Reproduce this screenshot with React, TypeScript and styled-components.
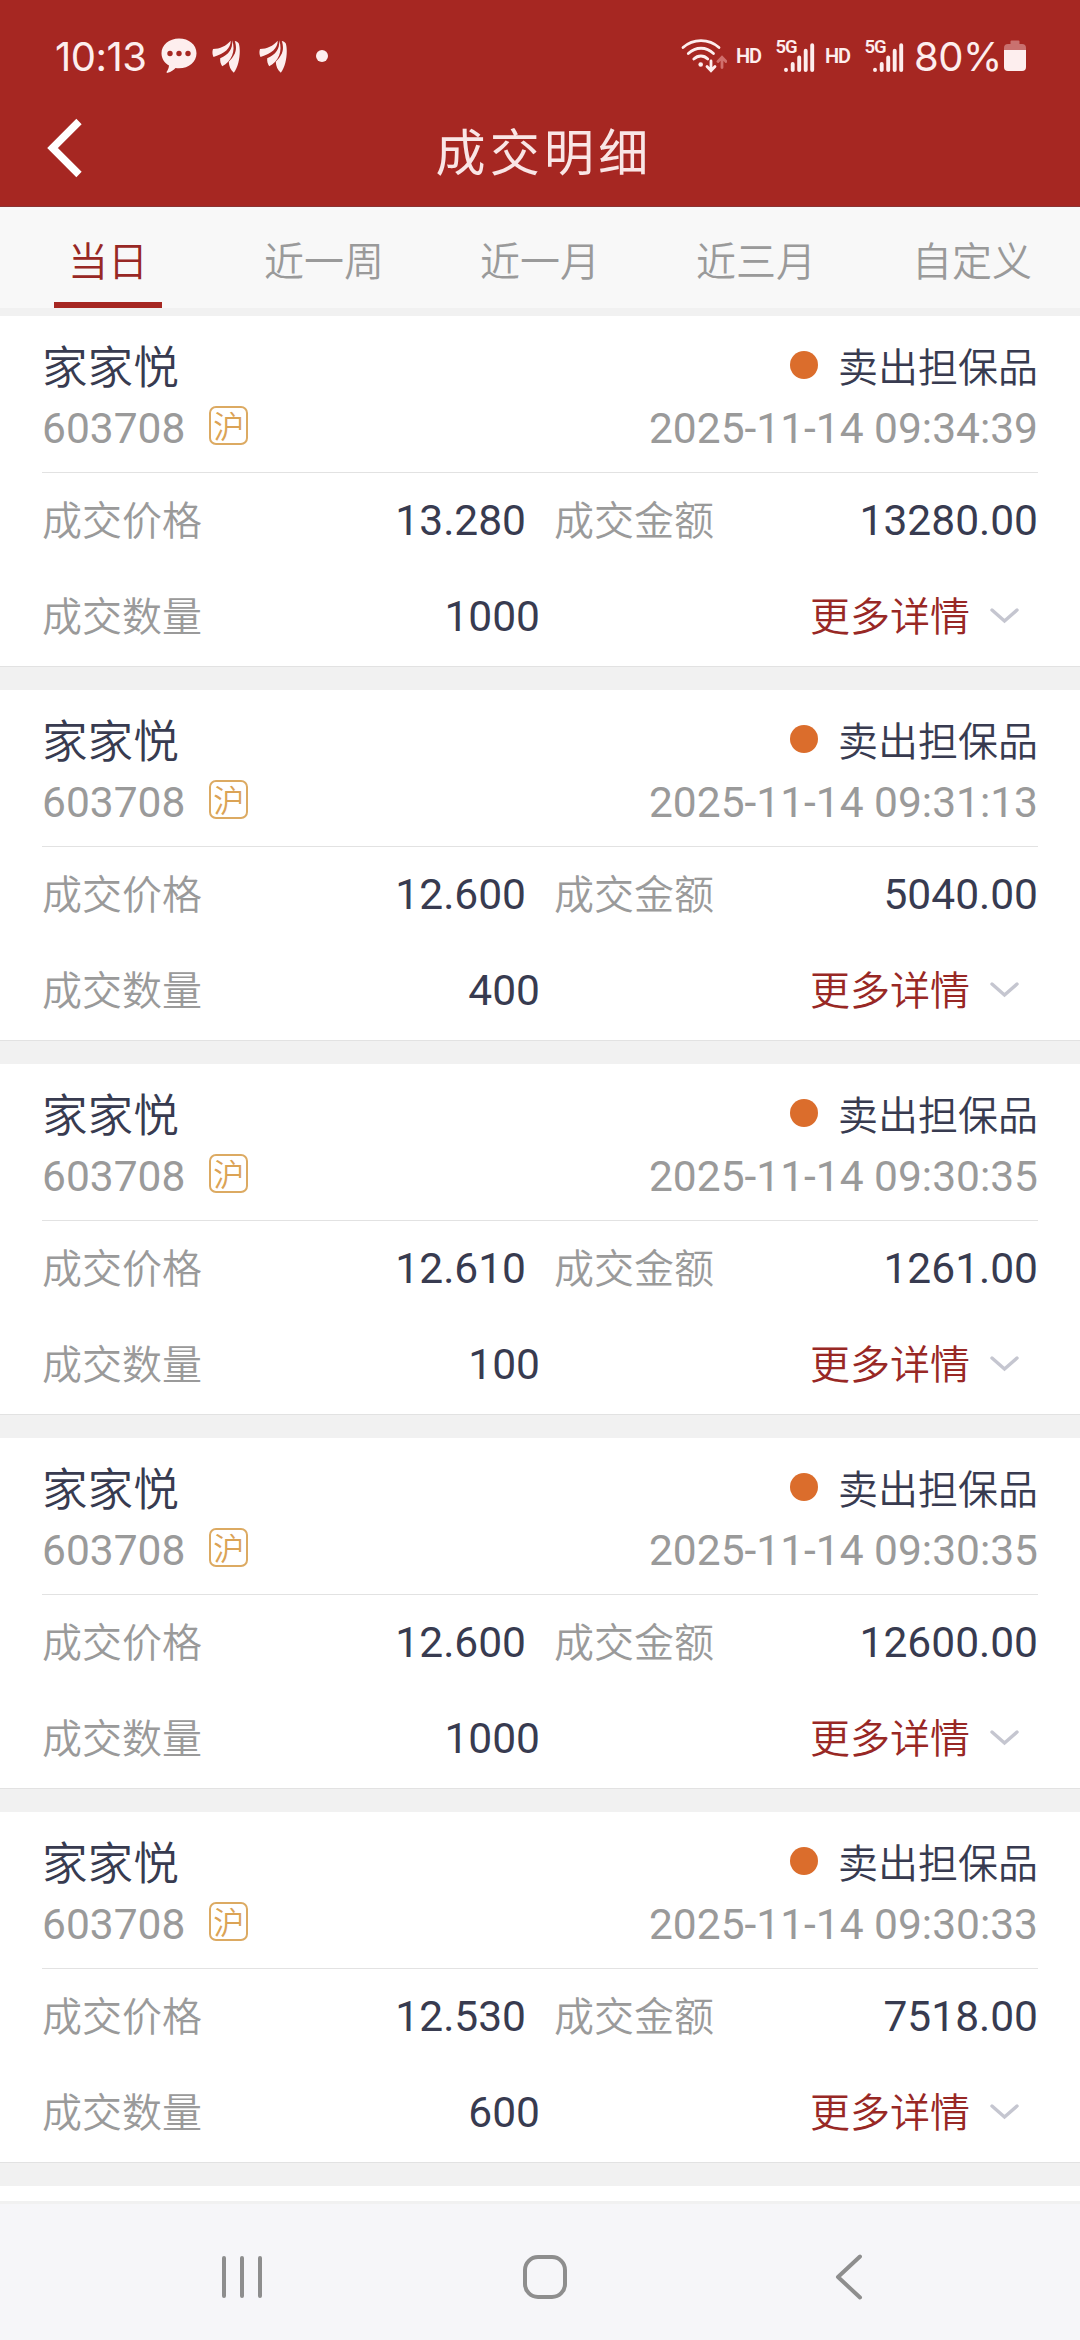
import React from "react";
import styled, { createGlobalStyle } from "styled-components";

const cjk = '"Noto Sans CJK SC", sans-serif';

const GlobalStyle = createGlobalStyle`
  * { box-sizing: border-box; }
  body { margin: 0; background: #f1f1f1; font-family: Roboto, ${cjk}; }
`;

const Screen = styled.div`
  width: 1080px;
  height: 2340px;
  display: flex;
  flex-direction: column;
  overflow: hidden;
  background: #f1f1f1;
`;

const Header = styled.header`
  height: 207px;
  flex: none;
  background: #a62722;
  border-bottom: 1px solid #8a3434;
`;

const StatusBar = styled.div`
  height: 112px;
  padding: 0 54px 0 54px;
  display: flex;
  justify-content: space-between;
  color: #fdeeee;
`;

const StatusGroup = styled.div`
  display: flex;
  align-items: center;
  height: 112px;

  svg { flex: none; }
`;

const StatusText = styled.span<{ $width: number }>`
  width: ${(p) => p.$width}px;
  padding-left: 1px;
  font-family: Inter, sans-serif;
  font-size: 40px;
  letter-spacing: -0.5px;
  white-space: nowrap;
`;

const TitleBar = styled.div`
  height: 94px;
  display: grid;
  grid-template-columns: 160px 1fr 152px;
`;

const BackButton = styled.button`
  border: 0;
  padding: 0 0 0 47px;
  background: none;
  display: flex;
  align-items: flex-start;
`;

const Title = styled.h1`
  margin: 0;
  font: 400 50px/74px ${cjk};
  letter-spacing: 4.2px;
  text-align: center;
  color: #f9e6e6;
`;

const Tabs = styled.nav`
  height: 101px;
  flex: none;
  display: grid;
  grid-template-columns: repeat(5, 1fr);
  background: #f8f8f8;
`;

const Tab = styled.button<{ $active?: boolean }>`
  height: 101px;
  border: 0;
  padding: 0;
  background: none;
  display: flex;
  flex-direction: column;
  align-items: center;
  font: 350 40px/104px ${cjk};
  color: ${(p) => (p.$active ? "#982825" : "#9a9a9a")};

  &::after {
    content: "";
    width: 108px;
    height: 6px;
    flex: none;
    margin-top: -9px;
    background: ${(p) => (p.$active ? "#a62722" : "transparent")};
  }
`;

const List = styled.main`
  height: 1885px;
  flex: none;
  margin-top: 8px;
  overflow: hidden;
  display: flex;
  flex-direction: column;
  gap: 23px;
`;

const Card = styled.article`
  height: 351px;
  flex: none;
  padding: 0 42px;
  background: #fff;
  border-bottom: 1px solid #e2e2e2;
`;

const CardHead = styled.div`
  height: 157px;
  padding-top: 20px;
  border-bottom: 1px solid #e2e2e2;
`;

const Line = styled.div<{ $height: number }>`
  height: ${(p) => p.$height}px;
  display: flex;
  align-items: center;
  justify-content: space-between;
`;

const Name = styled.span`
  padding-bottom: 8px;
  font: 350 45.6px/62px ${cjk};
  color: #383b50;
`;

const Side = styled.span`
  padding-bottom: 6px;
  display: flex;
  align-items: center;
  gap: 20px;
  font: 350 40px/60px ${cjk};
  color: #383b50;
`;

const Dot = styled.i`
  width: 28px;
  height: 28px;
  border-radius: 50%;
  background: #db6d2c;
`;

const Code = styled.span`
  padding-bottom: 2px;
  display: flex;
  align-items: center;
  gap: 24px;
  font: 400 42.5px/60px Roboto, sans-serif;
  color: #9a9a9a;
`;

const Market = styled.span`
  width: 39px;
  height: 39px;
  margin-top: -7px;
  border: 2px solid #dcaa62;
  border-radius: 7px;
  font: 350 31px/33px ${cjk};
  text-align: center;
  color: #dba355;
`;

const Time = styled.time`
  padding-bottom: 2px;
  font: 400 42.5px/60px Roboto, sans-serif;
  color: #9a9a9a;
`;

const Row = styled.div`
  height: 96px;
  display: grid;
  align-items: center;
  grid-template-columns: 200px 284px 28px 200px 1fr;
`;

const Label = styled.span`
  padding-bottom: 6px;
  font: 350 40px/60px ${cjk};
  color: #9a9a9a;
`;

const Value = styled.span`
  font: 400 42.5px/60px Roboto, sans-serif;
  color: #383b50;
  text-align: right;
`;

const QuantityRow = styled(Row)`
  grid-template-columns: 200px 298px 1fr;
`;

const More = styled.button`
  border: 0;
  padding: 0 19px 6px 0;
  background: none;
  display: flex;
  align-items: center;
  justify-content: flex-end;
  gap: 20px;
  font: 350 40px/60px ${cjk};
  color: #982825;

  svg { margin-top: 3px; }
`;

const NextCard = styled.div`
  height: 15px;
  flex: none;
  background: #fff;
`;

const NavBar = styled.footer`
  height: 136px;
  flex: none;
  margin-top: auto;
  padding: 10px 0 0 10px;
  display: flex;
  align-items: center;
  justify-content: center;
  background: #f6f6f9;
`;

const NavButton = styled.button`
  width: 303px;
  border: 0;
  padding: 0;
  background: none;
  display: flex;
  justify-content: center;
`;

const StatusDot = styled.i`
  width: 12px;
  height: 12px;
  margin-left: 29px;
  border-radius: 50%;
  background: #fdeeee;
`;

const ChatSvg = styled.svg`
  margin-left: 15px;
`;

const WingSvg = styled.svg<{ $gap: number }>`
  margin-left: ${(p) => p.$gap}px;
`;

const WifiSvg = styled.svg`
  margin-right: 8px;
`;

const ChatIcon = () => (
  <ChatSvg width="36" height="36" viewBox="0 0 36 36">
    <path
      fill="#fdeeee"
      d="M18 .5C8 .5.5 7 .5 15.200c0 5.300 3 9.800 7.500 12.400-.2 2.500-1 4.400-2.200 6-.6.900 0 1.500.9 1.200 3.500-.9 6-2.700 7.800-4.800 1.100.2 2.300.3 3.500.3 10 0 17.500-6.700 17.500-15.100S28 .5 18 .5z"
    />
    <g fill="#a62722">
      <circle cx="9" cy="15.500" r="2.700" />
      <circle cx="18" cy="15.500" r="2.700" />
      <circle cx="27" cy="15.500" r="2.700" />
    </g>
  </ChatSvg>
);

const WingIcon = ({ gap }: { gap: number }) => (
  <WingSvg $gap={gap} width="28" height="33" viewBox="0 0 28 33" fill="#fdeeee">
    <path d="M1 9C8 9 14 6 18.800.8 18.500 8.500 13 13.500 1.500 17 .3 14.500.1 11.500 1 9z" />
    <path d="M20.200.3C20.800 9 17 14.500 8.200 18.200c-.2 3 .3 5.500 2 8C19.500 21.500 24 11 20.200.3z" />
    <path d="M22.800 1c3 9.500 0 14.500-6 20.800.2 4.500 1.800 8.200 5 11C27.500 26 29 10.500 26.800 3.500 25.800 2 24.300 1.200 22.800 1z" />
  </WingSvg>
);

const WifiIcon = () => (
  <WifiSvg width="46" height="36" viewBox="0 0 46 36" fill="none" stroke="#fdeeee" strokeWidth="2.800" strokeLinecap="round">
    <path d="M2 9.500C12 .2 28 .2 38 9.500M7.300 15.500c7.500-7 18-7 25.200 0M12.800 21c4.200-4 10-4 14 0" />
    <circle cx="19.700" cy="26.500" r="2.300" fill="#fdeeee" stroke="none" />
    <path d="M30 23v9.500m-4-4 4 4.300 4-4.300" />
    <path d="M41 29.500V20m-4 3.500 4-4.200 4 4.200" stroke="#d06f6c" />
  </WifiSvg>
);

const SignalIcon = () => (
  <svg width="89" height="52" viewBox="0 -8 89 52" fill="#fdeeee">
    <g fontFamily="Roboto, sans-serif" fontWeight="600">
      <text x="40.500" y="14.500" fontSize="18.500" textLength="22">5G</text>
      <text x="1" y="25" fontSize="20" textLength="26">HD</text>
    </g>
    <path
      d="M51 31.800v.3M57.700 26v6.100M64.200 19.400v12.700M70.700 12.800v19.300M77.200 7.300v24.800"
      stroke="#fdeeee"
      strokeWidth="3.900"
      strokeLinecap="round"
    />
  </svg>
);

const BatteryIcon = () => (
  <svg width="22" height="32" viewBox="0 0 22 32">
    <path fill="#c9716f" d="M6.500 3V1.500Q6.500.5 7.500.5h7q1 0 1 1V4H18q4 0 4 4v3H0V8q0-4 4-4h2.500z" />
    <path fill="#fdeeee" d="M0 10h22v17q0 4-4 4H4q-4 0-4-4z" />
  </svg>
);

interface Trade {
  time: string;
  price: string;
  amount: string;
  quantity: string;
}

const trades: Trade[] = [
  { time: "2025-11-14 09:34:39", price: "13.280", amount: "13280.00", quantity: "1000" },
  { time: "2025-11-14 09:31:13", price: "12.600", amount: "5040.00", quantity: "400" },
  { time: "2025-11-14 09:30:35", price: "12.610", amount: "1261.00", quantity: "100" },
  { time: "2025-11-14 09:30:35", price: "12.600", amount: "12600.00", quantity: "1000" },
  { time: "2025-11-14 09:30:33", price: "12.530", amount: "7518.00", quantity: "600" },
];

const TradeCard = ({ trade }: { trade: Trade }) => (
  <Card>
    <CardHead>
      <Line $height={64}>
        <Name>家家悦</Name>
        <Side>
          <Dot />
          卖出担保品
        </Side>
      </Line>
      <Line $height={60}>
        <Code>
          603708
          <Market>沪</Market>
        </Code>
        <Time>{trade.time}</Time>
      </Line>
    </CardHead>
    <Row>
      <Label>成交价格</Label>
      <Value>{trade.price}</Value>
      <span />
      <Label>成交金额</Label>
      <Value>{trade.amount}</Value>
    </Row>
    <QuantityRow>
      <Label>成交数量</Label>
      <Value>{trade.quantity}</Value>
      <More>
        更多详情
        <svg width="29" height="16" viewBox="0 0 29 16" fill="none">
          <path d="M2 2l12.500 11L27 2" stroke="#c5c6d0" strokeWidth="3.400" strokeLinecap="round" />
        </svg>
      </More>
    </QuantityRow>
  </Card>
);

export default function App() {
  return (
    <Screen>
      <GlobalStyle />
      <Header>
        <StatusBar>
          <StatusGroup>
            <StatusText $width={92}>10:13</StatusText>
            <ChatIcon />
            <WingIcon gap={15} />
            <WingIcon gap={19} />
            <StatusDot />
          </StatusGroup>
          <StatusGroup>
            <WifiIcon />
            <SignalIcon />
            <SignalIcon />
            <StatusText $width={91}>80%</StatusText>
            <BatteryIcon />
          </StatusGroup>
        </StatusBar>
        <TitleBar>
          <BackButton aria-label="返回">
            <svg width="36" height="72" viewBox="0 0 36 72" fill="none">
              <path d="M32 9.500 5.500 36 32 62.500" stroke="#fff" strokeWidth="7.500" />
            </svg>
          </BackButton>
          <Title>成交明细</Title>
        </TitleBar>
      </Header>
      <Tabs>
        <Tab $active>当日</Tab>
        <Tab>近一周</Tab>
        <Tab>近一月</Tab>
        <Tab>近三月</Tab>
        <Tab>自定义</Tab>
      </Tabs>
      <List>
        {trades.map((trade, i) => (
          <TradeCard key={i} trade={trade} />
        ))}
        <NextCard />
      </List>
      <NavBar>
        <NavButton aria-label="最近">
          <svg width="42" height="46" viewBox="0 0 42 46" stroke="#8e8e8e" strokeWidth="4" strokeLinecap="round">
            <path d="M3 4v38M21 4v38M39 4v38" />
          </svg>
        </NavButton>
        <NavButton aria-label="主页">
          <svg width="46" height="46" viewBox="0 0 46 46" fill="none" stroke="#8e8e8e" strokeWidth="4">
            <rect x="3" y="3" width="40" height="40" rx="13" />
          </svg>
        </NavButton>
        <NavButton aria-label="返回">
          <svg width="30" height="46" viewBox="0 0 30 46" fill="none" stroke="#8e8e8e" strokeWidth="4" strokeLinecap="round" strokeLinejoin="round">
            <path d="M27 2.500 5 23l22 20.500" />
          </svg>
        </NavButton>
      </NavBar>
    </Screen>
  );
}
